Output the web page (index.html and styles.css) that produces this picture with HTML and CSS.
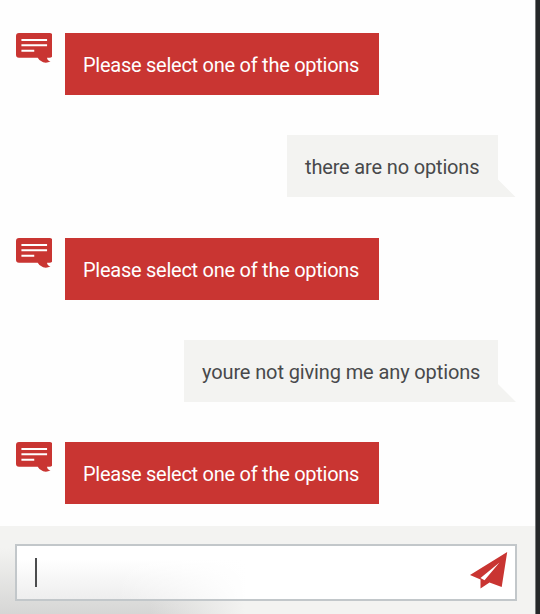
FILE: index.html
```html
<!DOCTYPE html>
<html lang="en">
<head>
<meta charset="utf-8">
<title>Chat</title>
<link rel="stylesheet" href="styles.css">
</head>
<body>
<svg class="defs" width="0" height="0" aria-hidden="true">
  <symbol id="chat" viewBox="0 0 37 31">
    <path fill="#c93532" d="M3 0H34Q37 0 37 3V22Q37 25 34 25H31.500Q31.500 27.500 35 29Q31 30.900 27.500 29.700Q23.500 28.200 22 25H3Q0 25 0 22V3Q0 0 3 0Z"/>
    <path stroke="#fff" stroke-width="2" d="M5.500 7H31.500M5.500 12.500H31.500M5.500 18H18.500"/>
  </symbol>
</svg>
<div class="app">
  <main class="messages">
    <div class="row"><svg class="icon"><use href="#chat"/></svg><div class="bubble bot">Please select one of the options</div></div>
    <div class="row user-row"><div class="bubble user short">there are no options</div></div>
    <div class="row"><svg class="icon"><use href="#chat"/></svg><div class="bubble bot">Please select one of the options</div></div>
    <div class="row user-row"><div class="bubble user long">youre not giving me any options</div></div>
    <div class="row"><svg class="icon"><use href="#chat"/></svg><div class="bubble bot">Please select one of the options</div></div>
  </main>
  <footer class="composer">
    <div class="field">
      <span class="caret"></span>
      <svg class="send" viewBox="0 0 38 37"><path fill="#c93532" d="M37.200 0L31.700 35L19.500 30.500L10.500 36.500V27.500L0 23ZM29.500 10.500L10.500 26L14.500 28.200Z" fill-rule="evenodd"/></svg>
    </div>
  </footer>
</div>
</body>
</html>
```
FILE: styles.css
```css
* { box-sizing: border-box; }
body {
  margin: 0;
  width: 540px;
  height: 614px;
  overflow: hidden;
  background: #fefefe;
  font-family: Roboto, "Liberation Sans", sans-serif;
}
.defs { position: absolute; }
.app {
  display: flex;
  flex-direction: column;
  height: 614px;
  border-right: 4px solid #252729;
  box-shadow: inset -1px 0 #77797a;
}
.messages {
  display: flex;
  flex-direction: column;
  gap: 40.300px;
  height: 526px;
  padding: 33.200px 37px 0 15.500px;
  margin-right: 1px;
}
.row { display: flex; height: 62px; flex: none; }
.user-row { justify-content: flex-end; }
.icon { width: 36.500px; height: 30.600px; margin-right: 12.500px; }
.bubble {
  height: 62px;
  padding: 1px 18px 0;
  font-size: 20px;
  line-height: 62px;
  white-space: nowrap;
}
.bot { width: 314px; padding-left: 18.500px; background: #c93532; color: #fff; letter-spacing: -.26px; }
.user { position: relative; background: #f3f3f1; color: #48494b; }
.short { width: 211px; letter-spacing: -.16px; }
.long { width: 314px; letter-spacing: -.12px; }
.user::after {
  content: "";
  position: absolute;
  right: -18px;
  bottom: 0;
  width: 18px;
  height: 18px;
  background: #f3f3f1;
  clip-path: polygon(0 0, 100% 100%, 0 100%);
}
.composer {
  height: 88px;
  margin-right: 1px;
  padding: 18px 18px 0 15px;
  background:
    linear-gradient(90deg, transparent 150px, #f3f3f1 245px),
    linear-gradient(#f3f3f1 25%, #d6d6d5);
}
.field {
  display: flex;
  align-items: flex-start;
  justify-content: space-between;
  height: 57px;
  padding: 6px 7.500px 0 18px;
  border: 2px solid #c2c7ca;
  background:
    linear-gradient(90deg, transparent 100px, #fff 230px),
    linear-gradient(#fff 25%, #eee);
}
.caret { width: 2px; height: 29px; margin-top: 6px; background: #4b4c4e; }
.send { width: 38px; height: 37px; }
```
